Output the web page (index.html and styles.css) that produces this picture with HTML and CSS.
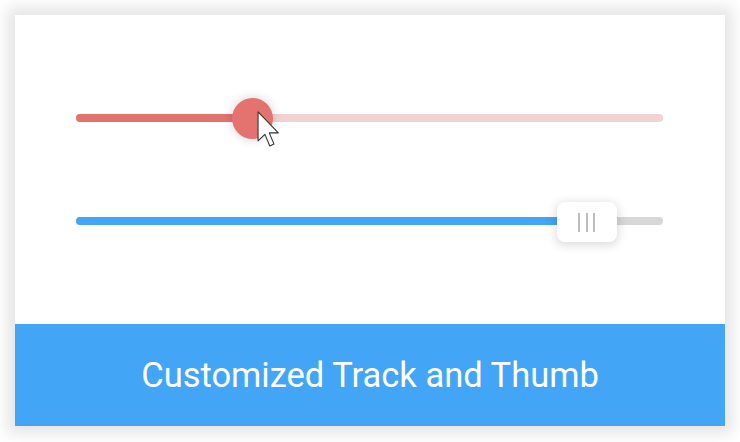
FILE: index.html
```html
<!DOCTYPE html>
<html>
<head>
<meta charset="utf-8">
<link rel="stylesheet" href="styles.css">
</head>
<body>
<div class="card">
  <div class="content">
    <div class="slider slider-red">
      <div class="track"><div class="fill" style="width: 30%"></div></div>
      <div class="thumb-round" style="left: 30%"></div>
      <svg class="cursor" style="left: 30%" width="22" height="38" viewBox="0 0 12 21">
        <path d="M0.5 0.5 L0.5 16.5 L4.3 12.9 L7 19.3 L9.3 18.3 L6.7 12.1 L11.7 12.1 Z" fill="#ffffff" stroke="#333" stroke-width="0.6" stroke-linejoin="round"/>
      </svg>
    </div>
    <div class="slider slider-blue">
      <div class="track"><div class="fill" style="width: 87%"></div></div>
      <div class="thumb-rect" style="left: 87%">
        <span class="grip"></span><span class="grip"></span><span class="grip"></span>
      </div>
    </div>
  </div>
  <div class="footer">Customized Track and Thumb</div>
</div>
</body>
</html>
```

FILE: styles.css
```css
html, body {
  margin: 0;
  padding: 0;
  background: #ffffff;
}
body {
  width: 740px;
  height: 442px;
  overflow: hidden;
  font-family: Roboto, "Liberation Sans", sans-serif;
}
.card {
  margin: 15px;
  width: 710px;
  height: 411px;
  display: flex;
  flex-direction: column;
  background: #ffffff;
  box-shadow: 0 0 14px 8px rgba(0, 0, 0, 0.1);
}
.content {
  height: 309px;
  box-sizing: border-box;
  padding: 83px 62px 0 61px;
  display: flex;
  flex-direction: column;
  gap: 63px;
}
.slider {
  position: relative;
  height: 40px;
  display: flex;
  align-items: center;
}
.track {
  width: 100%;
  height: 8px;
  border-radius: 4px;
  overflow: hidden;
}
.fill {
  height: 100%;
}
.slider-red .track { background: #f1d3d3; }
.slider-red .fill { background: #e4736f; }
.slider-blue .track { background: #d7d7d7; }
.slider-blue .fill { background: #42a5f5; }
.thumb-round {
  position: absolute;
  top: -0.5px;
  width: 41px;
  height: 41px;
  margin-left: -20.5px;
  border-radius: 50%;
  background: #e4736f;
  box-shadow: 0 0 9px 2px rgba(0, 0, 0, 0.12);
}
.cursor {
  position: absolute;
  top: 13px;
  margin-left: 5px;
}
.thumb-rect {
  position: absolute;
  top: 1px;
  width: 60px;
  height: 40px;
  margin-left: -30px;
  border-radius: 8px;
  background: #ffffff;
  box-shadow: 0 2px 10px 2px rgba(0, 0, 0, 0.13);
  display: flex;
  justify-content: center;
  align-items: center;
  gap: 5.5px;
}
.grip {
  width: 2px;
  height: 19px;
  background: #bdbdbd;
}
.footer {
  flex: 1;
  background: #42a5f5;
  color: #ffffff;
  display: flex;
  align-items: center;
  justify-content: center;
  font-size: 34.5px;
  padding-bottom: 0;
}
```
